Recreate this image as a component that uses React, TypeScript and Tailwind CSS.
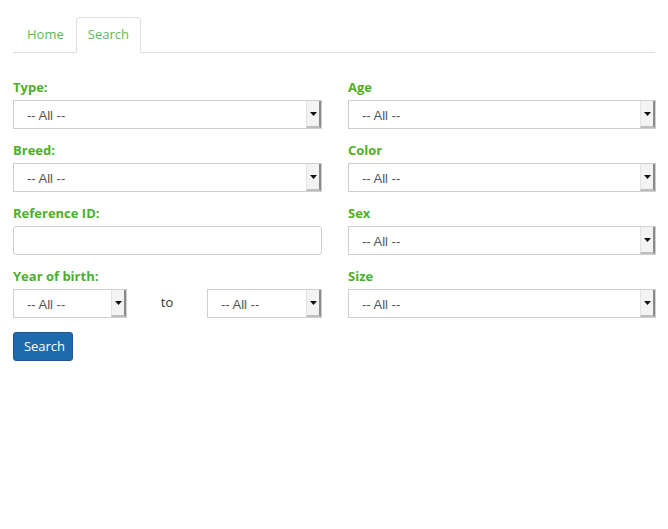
const font = { fontFamily: '"Open Sans", "Liberation Sans", sans-serif' };

const FakeSelect = ({ className = "" }: { className?: string }) => (
  <div
    className={`flex h-[29px] items-stretch border border-[#cfcfcf] bg-white ${className}`}
  >
    <span className="flex flex-1 items-center pl-[13px] pt-[2px] font-['Liberation_Sans',sans-serif] text-[13px] text-[#555]">
      -- All --
    </span>
    <span className="flex w-[15px] items-center justify-center border-l border-l-[#e3e3e3] border-r-2 border-b-2 border-r-[#8a8a8a] border-b-[#bdbdbd] bg-[#f3f3f3]">
      <svg width="7" height="4" viewBox="0 0 7 4">
        <path d="M0 0h7L3.5 4z" fill="#111" />
      </svg>
    </span>
  </div>
);

const Label = ({ children }: { children: React.ReactNode }) => (
  <label className="mb-[4px] block text-[13px] font-bold leading-[18px] text-[#4eae2c]">
    {children}
  </label>
);

export default function App() {
  return (
    <div className="min-h-[529px] w-[668px] bg-white px-[13px] pt-[17px]" style={font}>
      {/* --- Tabs --- */}
      <div className="flex h-[36px] border-b border-[#dedede]">
        <div className="flex h-[35px] items-center pl-[14px] pr-[12px] text-[13px] text-[#5cb85c]">
          Home
        </div>
        <div className="flex h-[36px] items-center rounded-t-[4px] border border-b-white border-[#dedede] px-[11px] pb-px text-[13px] text-[#5cb85c]">
          Search
        </div>
      </div>

      {/* --- Form --- */}
      <div className="mt-[25px] grid grid-cols-[309px_308px] gap-x-[26px] gap-y-[12px]">
        <div>
          <Label>Type:</Label>
          <FakeSelect />
        </div>
        <div>
          <Label>Age</Label>
          <FakeSelect />
        </div>
        <div>
          <Label>Breed:</Label>
          <FakeSelect />
        </div>
        <div>
          <Label>Color</Label>
          <FakeSelect />
        </div>
        <div>
          <Label>Reference ID:</Label>
          <input className="block h-[29px] w-full rounded-[3px] border border-[#cfcfcf] bg-white outline-none" />
        </div>
        <div>
          <Label>Sex</Label>
          <FakeSelect />
        </div>
        <div>
          <Label>Year of birth:</Label>
          <div className="flex items-center">
            <FakeSelect className="w-[114px]" />
            <span className="flex-1 pb-px text-center text-[13px] text-[#333]">to</span>
            <FakeSelect className="w-[115px]" />
          </div>
        </div>
        <div>
          <Label>Size</Label>
          <FakeSelect />
        </div>
      </div>

      <button className="mt-[14px] h-[29px] w-[60px] rounded-[3px] border border-[#1a5a94] bg-[#1f6aad] pl-[3px] text-[13px] text-white">
        Search
      </button>
    </div>
  );
}
